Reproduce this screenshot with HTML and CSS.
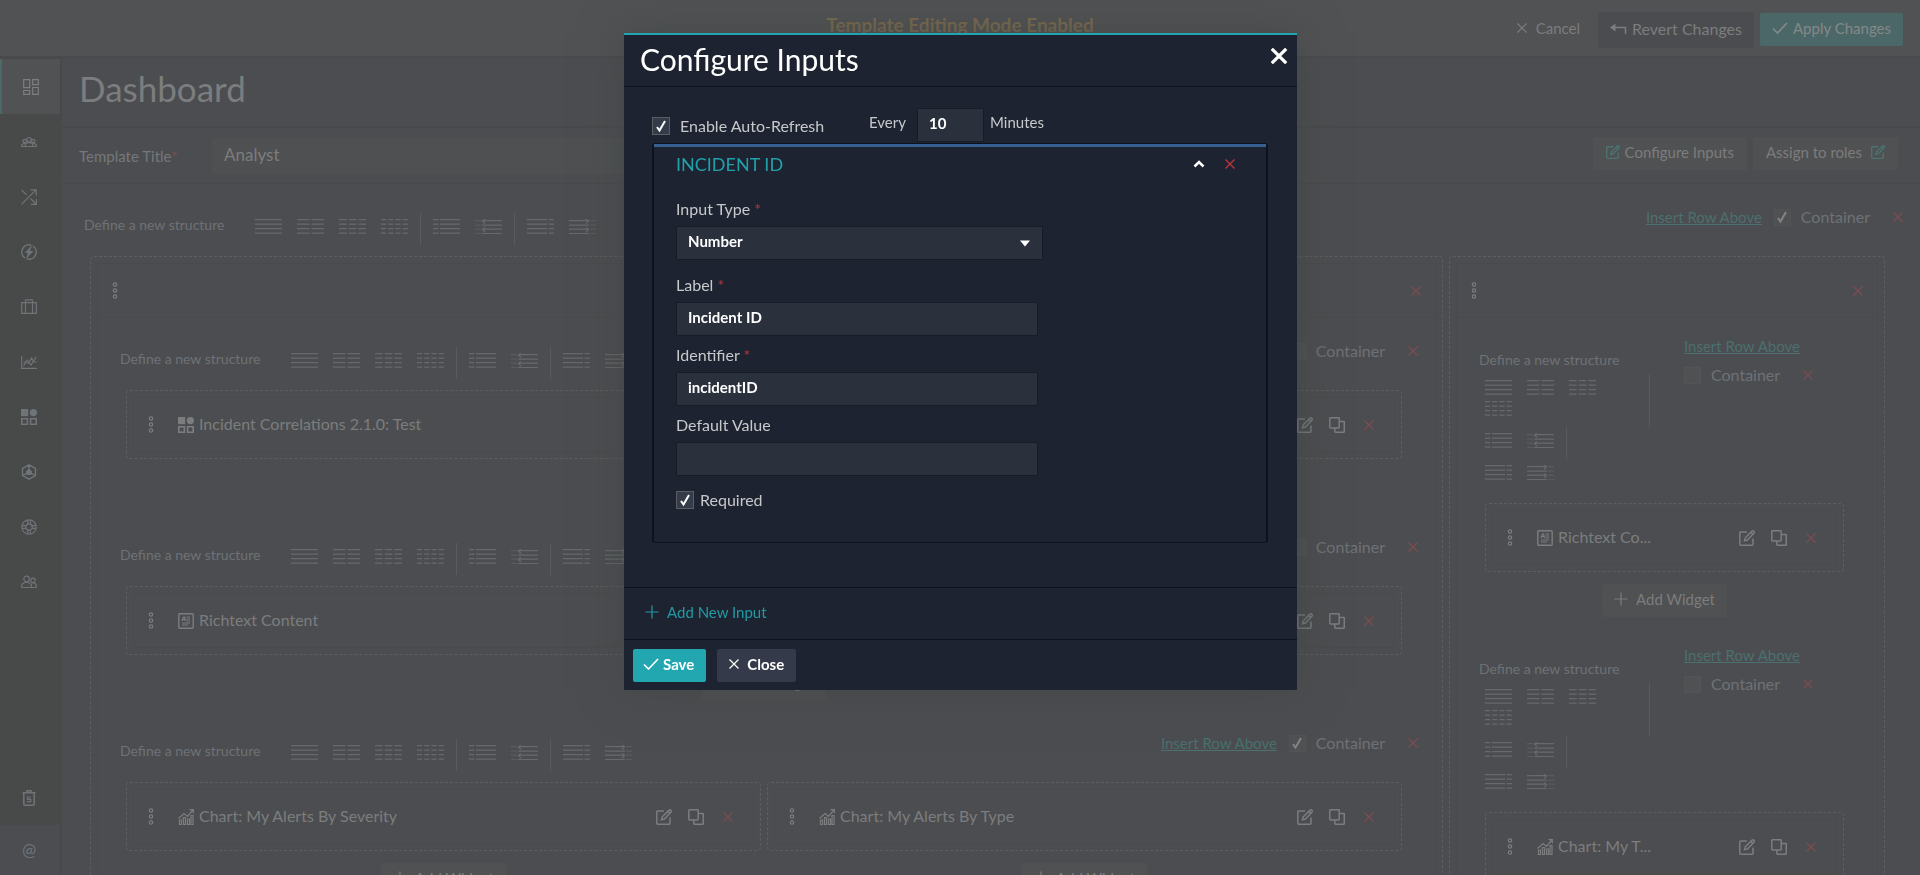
FILE: index.html
```html
<!DOCTYPE html>
<html lang="en">
<head>
<meta charset="utf-8">
<title>Dashboard</title>
<link rel="stylesheet" href="styles.css">
</head>
<body>
<svg class="sprite" aria-hidden="true">
  <symbol id="dash" viewBox="0 0 16 16"><path d="M.7.7h6v8h-6zM9.7.7h5.6v5H9.7zM.7 11.5h6v3.8h-6zM9.7 8.5h5.6v6.8H9.7z"/></symbol>
  <symbol id="group" viewBox="0 0 16 16"><path d="M.7 12.5h14.6v-1.7L13 9.3l-1.6.6-2-1.2H6.6l-2 1.2L3 9.3.7 10.800zM4.300 12.500v-2.500M11.700 12.500v-2.500"/><circle cx="8" cy="5.700" r="2.200"/><circle cx="3.600" cy="7" r="1.700"/><circle cx="12.400" cy="7" r="1.700"/></symbol>
  <symbol id="shuffle" viewBox="0 0 16 16"><path d="M.5.8l5 5M.5 15.300L15 .8M9.500.8h5.800v5.700M9.500 9.500l5.500 5.500M9.800 15.300h5.500V10"/></symbol>
  <symbol id="bolt" viewBox="0 0 16 16"><path d="M10 1.100A7.200 7.200 0 0 0 4 14M6 14.900A7.200 7.200 0 0 0 12 2" stroke-width="1.500"/><path class="fill" d="M11.500.2L3.800 9h3.400L4.500 15.800 12.400 7H8.900z"/></symbol>
  <symbol id="case" viewBox="0 0 16 16"><path d="M.7 3.700h14.600v10.600H.7zM4.500 14V1.500Q4.500.8 5.200.8h5.600q.7 0 .7.700V14"/></symbol>
  <symbol id="line" viewBox="0 0 16 16"><path d="M.7 2v12.300H16M2.500 12L6 6l4 5 5.300-8M2.500 8l5 1 3.200-5 2 4h3"/></symbol>
  <symbol id="apps" viewBox="0 0 16 16"><path class="fill" d="M0 0h7.200v7.200H0z"/><circle class="fill" cx="12.400" cy="3.600" r="3.600"/><path stroke-width="1.600" d="M.8 9.700h5.600v5.500H.8zM9.600 9.700h5.600v5.500H9.600z"/></symbol>
  <symbol id="hex" viewBox="0 0 16 16"><path stroke-width="1.400" d="M8 .8l6.500 3.700v7L8 15.200l-6.500-3.700v-7zM8 1v4M2 11.500L6 9M14 11.500L10 9"/><path class="fill" d="M8 4.500l3 3-.6 3.500H5.600L5 7.500z"/></symbol>
  <symbol id="ring" viewBox="0 0 16 16"><circle cx="8" cy="8" r="7.200"/><circle cx="8" cy="8" r="3.200"/><path d="M6.700 1v4M9.300 1v4M6.700 11v4M9.300 11v4M1 6.700h4M1 9.300h4M11 6.700h4M11 9.300h4"/></symbol>
  <symbol id="users" viewBox="0 0 16 16"><circle cx="5.600" cy="5" r="2.800"/><circle cx="12" cy="6.300" r="2.200"/><path d="M.7 13.500v-2q0-2.300 3.500-3h3q3.200.7 3.200 3v2zM10.500 13.500h4.800v-2q0-2-2.500-2.500h-2"/></symbol>
  <symbol id="trash" viewBox="0 0 16 16"><path stroke-width="1.500" d="M1.500 2.800h13M6 2.500V.8h4v1.700M2.800 3v11q0 1.200 1 1.200h8.400q1 0 1-1.200V3"/><path d="M10 7H6.500v2.300h3.300v2.400H6"/></symbol>
  <symbol id="dots" viewBox="0 0 6 17"><circle cx="3" cy="2.500" r="1.700"/><circle cx="3" cy="8.500" r="1.700"/><circle cx="3" cy="14.500" r="1.700"/></symbol>
  <symbol id="x" viewBox="0 0 10 10"><path d="M.5.5l9 9M9.500.5l-9 9"/></symbol>
  <symbol id="check" viewBox="0 0 16 12"><path d="M1 6.500l4.500 4.500L15 1"/></symbol>
  <symbol id="plus" viewBox="0 0 14 14"><path d="M7 .5v13M.5 7h13"/></symbol>
  <symbol id="revert" viewBox="0 0 17 12"><path d="M2 4.500h13.500V11" stroke-width="1.500"/><path class="fill" d="M0 4.500L5.500.5v8z"/></symbol>
  <symbol id="edit" viewBox="0 0 16 16"><path stroke-width="1.500" d="M8 2H1.700q-.9 0-.9.900v11.400q0 .9.900.9h11.400q.9 0 .9-.9V8.500M5.500 10.800l.8-3 6.700-6.600q1.200-.8 2 .2.700.9-.1 1.800L8.400 10zM11.800 2.500l1.900 1.900"/></symbol>
  <symbol id="copy" viewBox="0 0 16 16"><path stroke-width="1.500" d="M.8 1.500q0-.7.7-.7h8q.7 0 .7.700v8.700q0 .7-.7.7h-8q-.7 0-.7-.7zM10.500 4.500H15q.3 0 .3.500v9.500q0 .7-.7.7H6.500q-.7 0-.7-.7v-3"/></symbol>
  <symbol id="rich" viewBox="0 0 16 16"><rect x=".8" y=".8" width="14.400" height="14.400" rx="1" stroke-width="1.400"/><path d="M4 8l1.500-4h1L7.500 8M4.500 6.500h3M8.500 4h3.500M8.500 6h3.500M8.500 8h3.500M4 10h8M4 12h6"/></symbol>
  <symbol id="bars" viewBox="0 0 16 16"><path d="M1.500 15.500V11h2v4.500zM5.500 15.500V8.500h2v7zM9.500 15.500V10h2v5.500zM13 15.500V6.500h2v9zM.5 9.500L6 4.500l3.500 3 5-6M11.500.7h3.800v3.500"/></symbol>
  <symbol id="s1" viewBox="0 0 27 15"><path d="M0 .7h27M0 5.200h27M0 9.700h27M0 14.200h27"/></symbol>
  <symbol id="s2" viewBox="0 0 27 15"><path stroke-dasharray="12.500 2" d="M0 .7h27M0 5.200h27M0 9.700h27M0 14.200h27"/></symbol>
  <symbol id="s3" viewBox="0 0 27 15"><path stroke-dasharray="7.700 2" d="M0 .7h27M0 5.200h27M0 9.700h27M0 14.200h27"/></symbol>
  <symbol id="s4" viewBox="0 0 27 15"><path stroke-dasharray="5.200 2" d="M0 .7h27M0 5.200h27M0 9.700h27M0 14.200h27"/></symbol>
  <symbol id="s5" viewBox="0 0 27 15"><path d="M0 .7h5.500M7 .7h20M0 5.200h5.500M7 5.200h20M0 9.700h5.500M7 9.700h20M0 14.200h5.500M7 14.200h20"/></symbol>
  <symbol id="s6" viewBox="0 0 27 15"><path d="M7 1.700h20M7 6.200h20M7 10.200h20M7 14.500h20M10 0L7.500 2 10 4.500M10 8.500L7.500 10.500 10 13"/><path opacity=".5" d="M0 1.700h6M0 6.200h6M0 10.200h6M0 14.500h6"/></symbol>
  <symbol id="s7" viewBox="0 0 27 15"><path d="M0 .7h20M21.500.7H27M0 5.200h20M21.500 5.200H27M0 9.700h20M21.500 9.700H27M0 14.200h20M21.500 14.200H27"/></symbol>
  <symbol id="s8" viewBox="0 0 27 15"><path d="M0 1.700h20M0 6.200h20M0 10.200h20M0 14.500h20M17 0l2.500 2L17 4.500M17 8.500l2.500 2L17 13"/><path opacity=".5" d="M21 1.700h6M21 6.200h6M21 10.200h6M21 14.500h6"/></symbol>
</svg>

<div class="app">
  <header class="topbar">
    <p class="mode">Template Editing Mode Enabled</p>
    <div class="topbar-actions">
      <button class="btn plain"><svg class="i10"><use href="#x"/></svg>Cancel</button>
      <button class="btn revert"><svg class="i-revert"><use href="#revert"/></svg>Revert Changes</button>
      <button class="btn apply"><svg class="i-check"><use href="#check"/></svg>Apply Changes</button>
    </div>
  </header>
  <div class="body">
    <nav class="sidebar">
      <a href="#" class="active" aria-label="Dashboard"><svg class="i16"><use href="#dash"/></svg></a>
      <a href="#" aria-label="Teams"><svg class="i16"><use href="#group"/></svg></a>
      <a href="#" aria-label="Flows"><svg class="i16"><use href="#shuffle"/></svg></a>
      <a href="#" aria-label="Actions"><svg class="i16"><use href="#bolt"/></svg></a>
      <a href="#" aria-label="Cases"><svg class="i16"><use href="#case"/></svg></a>
      <a href="#" aria-label="Reports"><svg class="i16"><use href="#line"/></svg></a>
      <a href="#" aria-label="Widgets"><svg class="i16"><use href="#apps"/></svg></a>
      <a href="#" aria-label="Assets"><svg class="i16"><use href="#hex"/></svg></a>
      <a href="#" aria-label="Help"><svg class="i16"><use href="#ring"/></svg></a>
      <a href="#" aria-label="Users"><svg class="i16"><use href="#users"/></svg></a>
      <a href="#" class="bin" aria-label="Recycle bin"><svg class="i16"><use href="#trash"/></svg></a>
      <a href="#" class="at">@</a>
    </nav>
    <main class="main">
      <div class="page-title"><h1>Dashboard</h1></div>
      <div class="template-row">
        <label for="tpl">Template Title<span class="req">*</span></label>
        <input id="tpl" class="tpl-input" type="text" value="Analyst">
        <div class="template-actions">
          <button class="btn soft"><svg class="i14 teal"><use href="#edit"/></svg>Configure Inputs</button>
          <button class="btn soft">Assign to roles<svg class="i14 teal late"><use href="#edit"/></svg></button>
        </div>
      </div>

      <div class="bar">
        <span class="bar-label">Define a new structure</span>
        <div class="groups">
          <div class="grp"><button aria-label="1 column"><svg><use href="#s1"/></svg></button><button aria-label="2 columns"><svg><use href="#s2"/></svg></button><button aria-label="3 columns"><svg><use href="#s3"/></svg></button><button aria-label="4 columns"><svg><use href="#s4"/></svg></button></div>
          <div class="grp"><button aria-label="Left column"><svg><use href="#s5"/></svg></button><button aria-label="Collapsible left"><svg><use href="#s6"/></svg></button></div>
          <div class="grp"><button aria-label="Right column"><svg><use href="#s7"/></svg></button><button aria-label="Collapsible right"><svg><use href="#s8"/></svg></button></div>
        </div>
        <div class="controls"><a href="#">Insert Row Above</a><label><input type="checkbox" checked>Container</label><button class="del" aria-label="Delete row"><svg class="i10"><use href="#x"/></svg></button></div>
      </div>

      <div class="columns">
        <section class="column">
          <div class="column-in">
            <div class="column-head"><svg class="dots"><use href="#dots"/></svg><button class="del" aria-label="Delete column"><svg class="i10"><use href="#x"/></svg></button></div>

            <div class="bar">
              <span class="bar-label">Define a new structure</span>
              <div class="groups">
                <div class="grp"><button aria-label="1 column"><svg><use href="#s1"/></svg></button><button aria-label="2 columns"><svg><use href="#s2"/></svg></button><button aria-label="3 columns"><svg><use href="#s3"/></svg></button><button aria-label="4 columns"><svg><use href="#s4"/></svg></button></div>
                <div class="grp"><button aria-label="Left column"><svg><use href="#s5"/></svg></button><button aria-label="Collapsible left"><svg><use href="#s6"/></svg></button></div>
                <div class="grp"><button aria-label="Right column"><svg><use href="#s7"/></svg></button><button aria-label="Collapsible right"><svg><use href="#s8"/></svg></button></div>
              </div>
              <div class="controls"><a href="#">Insert Row Above</a><label><input type="checkbox">Container</label><button class="del" aria-label="Delete row"><svg class="i10"><use href="#x"/></svg></button></div>
            </div>
            <div class="slots">
              <div class="slot">
                <div class="widget"><div class="widget-in"><svg class="dots"><use href="#dots"/></svg><svg class="i16"><use href="#apps"/></svg><span class="name">Incident Correlations 2.1.0: Test</span><button aria-label="Edit"><svg class="i16"><use href="#edit"/></svg></button><button aria-label="Copy"><svg class="i16"><use href="#copy"/></svg></button><button class="del" aria-label="Delete"><svg class="i10"><use href="#x"/></svg></button></div></div>
                <button class="btn add"><svg class="i14"><use href="#plus"/></svg>Add Widget</button>
              </div>
            </div>

            <div class="bar">
              <span class="bar-label">Define a new structure</span>
              <div class="groups">
                <div class="grp"><button aria-label="1 column"><svg><use href="#s1"/></svg></button><button aria-label="2 columns"><svg><use href="#s2"/></svg></button><button aria-label="3 columns"><svg><use href="#s3"/></svg></button><button aria-label="4 columns"><svg><use href="#s4"/></svg></button></div>
                <div class="grp"><button aria-label="Left column"><svg><use href="#s5"/></svg></button><button aria-label="Collapsible left"><svg><use href="#s6"/></svg></button></div>
                <div class="grp"><button aria-label="Right column"><svg><use href="#s7"/></svg></button><button aria-label="Collapsible right"><svg><use href="#s8"/></svg></button></div>
              </div>
              <div class="controls"><a href="#">Insert Row Above</a><label><input type="checkbox">Container</label><button class="del" aria-label="Delete row"><svg class="i10"><use href="#x"/></svg></button></div>
            </div>
            <div class="slots">
              <div class="slot">
                <div class="widget"><div class="widget-in"><svg class="dots"><use href="#dots"/></svg><svg class="i16"><use href="#rich"/></svg><span class="name">Richtext Content</span><button aria-label="Edit"><svg class="i16"><use href="#edit"/></svg></button><button aria-label="Copy"><svg class="i16"><use href="#copy"/></svg></button><button class="del" aria-label="Delete"><svg class="i10"><use href="#x"/></svg></button></div></div>
                <button class="btn add"><svg class="i14"><use href="#plus"/></svg>Add Widget</button>
              </div>
            </div>

            <div class="bar">
              <span class="bar-label">Define a new structure</span>
              <div class="groups">
                <div class="grp"><button aria-label="1 column"><svg><use href="#s1"/></svg></button><button aria-label="2 columns"><svg><use href="#s2"/></svg></button><button aria-label="3 columns"><svg><use href="#s3"/></svg></button><button aria-label="4 columns"><svg><use href="#s4"/></svg></button></div>
                <div class="grp"><button aria-label="Left column"><svg><use href="#s5"/></svg></button><button aria-label="Collapsible left"><svg><use href="#s6"/></svg></button></div>
                <div class="grp"><button aria-label="Right column"><svg><use href="#s7"/></svg></button><button aria-label="Collapsible right"><svg><use href="#s8"/></svg></button></div>
              </div>
              <div class="controls"><a href="#">Insert Row Above</a><label><input type="checkbox" checked>Container</label><button class="del" aria-label="Delete row"><svg class="i10"><use href="#x"/></svg></button></div>
            </div>
            <div class="slots">
              <div class="slot">
                <div class="widget"><div class="widget-in"><svg class="dots"><use href="#dots"/></svg><svg class="i16"><use href="#bars"/></svg><span class="name">Chart: My Alerts By Severity</span><button aria-label="Edit"><svg class="i16"><use href="#edit"/></svg></button><button aria-label="Copy"><svg class="i16"><use href="#copy"/></svg></button><button class="del" aria-label="Delete"><svg class="i10"><use href="#x"/></svg></button></div></div>
                <button class="btn add"><svg class="i14"><use href="#plus"/></svg>Add Widget</button>
              </div>
              <div class="slot">
                <div class="widget"><div class="widget-in"><svg class="dots"><use href="#dots"/></svg><svg class="i16"><use href="#bars"/></svg><span class="name">Chart: My Alerts By Type</span><button aria-label="Edit"><svg class="i16"><use href="#edit"/></svg></button><button aria-label="Copy"><svg class="i16"><use href="#copy"/></svg></button><button class="del" aria-label="Delete"><svg class="i10"><use href="#x"/></svg></button></div></div>
                <button class="btn add"><svg class="i14"><use href="#plus"/></svg>Add Widget</button>
              </div>
            </div>
          </div>
        </section>

        <section class="column">
          <div class="column-in">
            <div class="column-head"><svg class="dots"><use href="#dots"/></svg><button class="del" aria-label="Delete column"><svg class="i10"><use href="#x"/></svg></button></div>

            <div class="bar stacked">
              <div class="stack">
                <span class="bar-label">Define a new structure</span>
                <div class="groups">
                  <div class="grp"><button aria-label="1 column"><svg><use href="#s1"/></svg></button><button aria-label="2 columns"><svg><use href="#s2"/></svg></button><button aria-label="3 columns"><svg><use href="#s3"/></svg></button><button aria-label="4 columns"><svg><use href="#s4"/></svg></button></div>
                  <div class="grp"><button aria-label="Left column"><svg><use href="#s5"/></svg></button><button aria-label="Collapsible left"><svg><use href="#s6"/></svg></button></div>
                  <div class="grp"><button aria-label="Right column"><svg><use href="#s7"/></svg></button><button aria-label="Collapsible right"><svg><use href="#s8"/></svg></button></div>
                </div>
              </div>
              <div class="controls"><a href="#">Insert Row Above</a><label><input type="checkbox">Container</label><button class="del" aria-label="Delete row"><svg class="i10"><use href="#x"/></svg></button></div>
            </div>
            <div class="slots">
              <div class="slot">
                <div class="widget"><div class="widget-in"><svg class="dots"><use href="#dots"/></svg><svg class="i16"><use href="#rich"/></svg><span class="name">Richtext Co...</span><button aria-label="Edit"><svg class="i16"><use href="#edit"/></svg></button><button aria-label="Copy"><svg class="i16"><use href="#copy"/></svg></button><button class="del" aria-label="Delete"><svg class="i10"><use href="#x"/></svg></button></div></div>
                <button class="btn add"><svg class="i14"><use href="#plus"/></svg>Add Widget</button>
              </div>
            </div>

            <div class="bar stacked">
              <div class="stack">
                <span class="bar-label">Define a new structure</span>
                <div class="groups">
                  <div class="grp"><button aria-label="1 column"><svg><use href="#s1"/></svg></button><button aria-label="2 columns"><svg><use href="#s2"/></svg></button><button aria-label="3 columns"><svg><use href="#s3"/></svg></button><button aria-label="4 columns"><svg><use href="#s4"/></svg></button></div>
                  <div class="grp"><button aria-label="Left column"><svg><use href="#s5"/></svg></button><button aria-label="Collapsible left"><svg><use href="#s6"/></svg></button></div>
                  <div class="grp"><button aria-label="Right column"><svg><use href="#s7"/></svg></button><button aria-label="Collapsible right"><svg><use href="#s8"/></svg></button></div>
                </div>
              </div>
              <div class="controls"><a href="#">Insert Row Above</a><label><input type="checkbox">Container</label><button class="del" aria-label="Delete row"><svg class="i10"><use href="#x"/></svg></button></div>
            </div>
            <div class="slots">
              <div class="slot">
                <div class="widget"><div class="widget-in"><svg class="dots"><use href="#dots"/></svg><svg class="i16"><use href="#bars"/></svg><span class="name">Chart: My T...</span><button aria-label="Edit"><svg class="i16"><use href="#edit"/></svg></button><button aria-label="Copy"><svg class="i16"><use href="#copy"/></svg></button><button class="del" aria-label="Delete"><svg class="i10"><use href="#x"/></svg></button></div></div>
              </div>
            </div>
          </div>
        </section>
      </div>
    </main>
  </div>
</div>

<div class="overlay">
  <div class="modal" role="dialog" aria-labelledby="modal-title">
    <div class="modal-head">
      <h2 id="modal-title">Configure Inputs</h2>
      <button class="modal-x" aria-label="Close dialog"><svg><use href="#x"/></svg></button>
    </div>
    <div class="modal-body">
      <div class="refresh">
        <label class="refresh-on"><input type="checkbox" checked>Enable Auto-Refresh</label>
        <label class="refresh-every" for="mins">Every</label>
        <input id="mins" class="field mins" type="text" value="10">
        <span class="refresh-unit">Minutes</span>
      </div>
      <div class="card">
        <div class="card-head">
          <h3>INCIDENT ID</h3>
          <button class="fold" aria-label="Collapse"><svg viewBox="0 0 12 8"><path d="M1.500 6.500L6 2l4.500 4.500"/></svg></button>
          <button class="kill" aria-label="Remove input"><svg class="i10"><use href="#x"/></svg></button>
        </div>
        <div class="fields">
          <label for="type">Input Type <span class="req">*</span></label>
          <select id="type" class="field pick"><option>Number</option></select>
          <label for="lab">Label <span class="req">*</span></label>
          <input id="lab" class="field" type="text" value="Incident ID">
          <label for="ident">Identifier <span class="req">*</span></label>
          <input id="ident" class="field" type="text" value="incidentID">
          <label for="def">Default Value</label>
          <input id="def" class="field" type="text">
          <label class="required"><input type="checkbox" checked>Required</label>
        </div>
      </div>
    </div>
    <div class="modal-add"><button class="add-input"><svg class="i14"><use href="#plus"/></svg>Add New Input</button></div>
    <div class="modal-foot">
      <button class="btn save"><svg class="i-check"><use href="#check"/></svg>Save</button>
      <button class="btn close"><svg class="i10"><use href="#x"/></svg>Close</button>
    </div>
  </div>
</div>
</body>
</html>
```
FILE: styles.css
```css
* { box-sizing: border-box; }

body {
  margin: 0;
  background: #4c4d50;
  color: #7b7d7e;
  font: 15px/20px Lato, "Liberation Sans", sans-serif;
}

button, input, select { font: inherit; color: inherit; }
button { border: 0; padding: 0; background: none; cursor: pointer; }
h1, h2, h3, p { margin: 0; font-weight: 400; }
svg { display: block; flex: none; fill: none; stroke: currentColor; stroke-width: 1.2; }
.fill { fill: currentColor; stroke: none; }
.sprite { position: absolute; width: 0; height: 0; }
.i10 { width: 10px; height: 10px; }
.i14 { width: 14px; height: 14px; }
.i16 { width: 16px; height: 16px; }
.i-check { width: 16px; height: 12px; stroke-width: 1.6; }
.i-revert { width: 17px; height: 12px; }
.teal { color: #4a7574; }
.req { color: #7c5152; }
.del { color: #7c4c50; }

.app { display: flex; flex-direction: column; height: 100vh; overflow: hidden; }

/* Top bar */
.topbar {
  display: grid;
  grid-template-columns: 1fr auto 1fr;
  flex: none;
  height: 58px;
  padding: 0 17px;
  background: #515253;
  border-bottom: 2px solid #494a4b;
}
.mode { grid-column: 2; padding-top: 15px; font-size: 19px; font-weight: 700; color: #7d6b4e; }
.topbar-actions { display: flex; justify-content: flex-end; align-items: center; gap: 6px; padding-top: 3px; }

.btn { display: flex; align-items: center; gap: 8px; height: 33px; padding: 0 12px 3px; border-radius: 2px; font-size: 15px; }
.plain { gap: 9px; }
.revert { height: 36px; padding: 0 12px 2px; font-size: 16px; gap: 5px; background: #4b4c50; }
.apply { gap: 5px; background: #4c6767; color: #838989; }

.body { display: flex; flex: 1; min-height: 0; }

/* Side navigation */
.sidebar {
  display: flex;
  flex-direction: column;
  flex: none;
  width: 62px;
  padding-top: 1px;
  background: #484949;
  border-right: 2px solid #48494a;
}
.sidebar a {
  display: flex;
  align-items: center;
  justify-content: center;
  height: 55px;
  padding-right: 2px;
  color: #6f7478;
  text-decoration: none;
}
.sidebar .active { padding-right: 0; background: #515253; border-left: 2px solid #4a6969; color: #7c7e80; }
.sidebar .bin { margin-top: auto; }
.sidebar .at { height: 50px; background: #4c4d50; font-size: 17px; }

/* Page */
.main { display: flex; flex-direction: column; flex: 1; min-width: 0; background: #4c4d50; }
.page-title { flex: none; height: 70px; padding: 8px 17px; border-bottom: 2px solid #48494b; }
h1 { font-size: 35px; line-height: 44px; }

.template-row { display: flex; align-items: center; flex: none; height: 56px; padding: 0 22px 0 17px; border-bottom: 1px solid #48494b; }
.template-row label { width: 133px; color: #75777a; }
.tpl-input { width: 600px; height: 36px; padding: 0 12px 2px; border: 0; background: #4f5051; font-size: 17px; }
.template-actions { display: flex; gap: 6px; margin-left: auto; padding-bottom: 4px; }
.soft { padding: 0 13px 3px; gap: 5px; background: #505152; }
.soft .late { margin-left: 4px; }

/* Structure bars */
.bar { display: flex; align-items: flex-start; flex: none; height: 72px; padding: 0 17px 0 22px; }
.bar-label { width: 171px; margin-top: 31px; font-size: 14px; color: #6e7276; white-space: nowrap; }
.groups { display: flex; margin-top: 29px; }
.grp { display: flex; gap: 15px; height: 32px; padding: 6px 12px 0; border-right: 1px solid #5a5b5c; }
.grp:first-child { padding-left: 0; }
.grp:last-child { border-right: 0; }
.grp button { width: 27px; height: 15px; }
.grp svg { width: 27px; height: 15px; color: #67696a; }
.controls { display: flex; align-items: center; margin-left: auto; padding-top: 23px; }
.controls a { margin-right: 12px; color: #4a706f; }
.controls label { display: flex; align-items: center; gap: 10px; margin-right: 23px; color: #6e7276; font-size: 16px; }

input[type="checkbox"] { appearance: none; flex: none; width: 17px; height: 17px; margin: 0; border: 1px solid #525456; background: #505152; }
input[type="checkbox"]:checked {
  background: #505152 url("data:image/svg+xml,%3Csvg xmlns='http://www.w3.org/2000/svg' viewBox='0 0 10 12'%3E%3Cpath d='M1 7l2.500 3.500L9 1' fill='none' stroke='%23838585' stroke-width='2'/%3E%3C/svg%3E") center / 10px 12px no-repeat;
}

/* Layout columns */
.columns { display: grid; grid-template-columns: 1353fr 436fr; flex: 1; gap: 6px; min-height: 0; padding: 0 35px 0 28px; }
.column { min-width: 0; padding: 6px 6px 0; border: 1px dashed #5c5e5f; border-bottom: 0; border-radius: 4px 4px 0 0; }
.column-in { height: 100%; border: 1px solid #494a4c; border-bottom: 0; }
.column-head { display: flex; align-items: center; justify-content: space-between; height: 54px; padding: 0 14px; border-bottom: 1px solid #494a4c; }
.dots { width: 6px; height: 17px; color: #7b7d7e; }

.slots { display: flex; gap: 6px; padding: 0 33px 10px 28px; }
.slot { display: flex; flex-direction: column; align-items: center; flex: 1; gap: 12px; min-width: 0; }
.widget { align-self: stretch; height: 69px; padding: 6px; border: 1px dashed #5c5e5f; border-radius: 4px; }
.widget-in { display: flex; align-items: center; height: 55px; padding: 0 20px 0 14px; border: 1px solid #494a4c; }
.widget-in .dots { margin-right: 24px; }
.name { flex: 1; min-width: 0; margin-left: 5px; padding-bottom: 2px; font-size: 16px; white-space: nowrap; }
.widget-in button { margin-left: 16px; }
.widget-in .del { margin-left: 19px; }
.add { width: 125px; padding: 0 0 4px; justify-content: center; background: #505152; }

.stacked { height: 185px; gap: 34px; }
.stacked .stack { display: flex; flex-direction: column; flex: none; width: 171px; padding-top: 32px; }
.stacked .bar-label { margin: 0; }
.stacked .groups { flex-direction: column; align-items: flex-start; margin-top: 4px; }
.stacked .grp { padding-left: 6px; }
.stacked .grp:first-child { flex-wrap: wrap; align-content: flex-start; row-gap: 6px; width: 171px; height: 53px; padding-right: 24px; }
.stacked .controls { flex: 1; flex-wrap: wrap; align-content: flex-start; row-gap: 9px; margin: 0; padding-top: 18px; }

/* Dialog */
.overlay { position: fixed; inset: 0; display: flex; align-items: flex-start; justify-content: center; padding: 33px 0 0 1px; }
.modal { width: 673px; background: #1d2330; color: #c6c8ca; border-top: 2px solid #22a5b0; box-shadow: 0 0 40px rgba(64, 70, 70, .7); }
.modal-head { display: flex; align-items: flex-start; justify-content: space-between; height: 52px; padding: 8px 9px 0 16px; border-bottom: 1px solid #0e131b; color: #fff; }
h2 { font-size: 30px; line-height: 32px; }
.modal-x { padding-top: 5px; }
.modal-x svg { width: 18px; height: 16px; stroke-width: 2; }
.modal-body { padding: 21px 29px 44px 28px; }
.modal input[type="checkbox"] { width: 18px; height: 18px; border-color: #5b5d60; background-color: #343b49; }
.modal input[type="checkbox"]:checked {
  background-image: url("data:image/svg+xml,%3Csvg xmlns='http://www.w3.org/2000/svg' viewBox='0 0 10 12'%3E%3Cpath d='M1 7l2.500 3.500L9 1' fill='none' stroke='white' stroke-width='2'/%3E%3C/svg%3E");
}
.refresh { display: flex; align-items: flex-start; height: 35px; }
.refresh-on { display: flex; align-items: center; gap: 10px; width: 217px; padding-top: 8px; font-size: 16px; }
.refresh-every { width: 48px; padding-top: 4px; }
.refresh-unit { padding: 4px 0 0 6px; }
.field { height: 34px; padding: 0 11px 4px; border: 1px solid #171c26; border-radius: 0; background: #2b303d; color: #fff; font-size: 15px; font-weight: 700; }
.mins { width: 67px; }

.card { border: 1px solid #0e131b; border-width: 1px 2px; border-radius: 3px; padding-bottom: 32px; }
.card-head { display: flex; align-items: center; height: 40px; padding: 0 31px 3px 22px; border-top: 3px solid #34608f; }
h3 { flex: 1; font-size: 18px; color: #22a0aa; }
.fold svg { width: 12px; height: 8px; color: #fff; stroke-width: 2.5; }
.kill { margin-left: 20px; color: #c4363c; }
.fields { display: grid; grid-template-columns: 362px; padding: 5px 22px 0; }
.fields label { padding: 10px 0 7px; font-size: 16px; }
.fields .field { margin-bottom: -1px; }
.fields .pick {
  width: 367px;
  margin-bottom: 5px;
  appearance: none;
  background: #2b303d url("data:image/svg+xml,%3Csvg xmlns='http://www.w3.org/2000/svg' viewBox='0 0 10 7'%3E%3Cpath d='M0 .5h10L5 6.500z' fill='white'/%3E%3C/svg%3E") right 12px center / 10px 7px no-repeat;
}
.fields .required { display: flex; align-items: center; gap: 6px; padding: 15px 0 0; }
.modal .req { color: #b8383e; }

.modal-add { height: 53px; padding: 14px 21px; border-top: 1px solid #0e131b; border-bottom: 1px solid #0e131b; }
.add-input { display: flex; align-items: center; gap: 8px; color: #229aa4; }
.modal-foot { display: flex; gap: 11px; padding: 9px 9px 8px; color: #fff; }
.save, .close { padding-bottom: 4px; font-weight: 700; }
.save { gap: 4px; padding-left: 10px; background: #22a7b1; }
.close { background: #343a49; }
```
